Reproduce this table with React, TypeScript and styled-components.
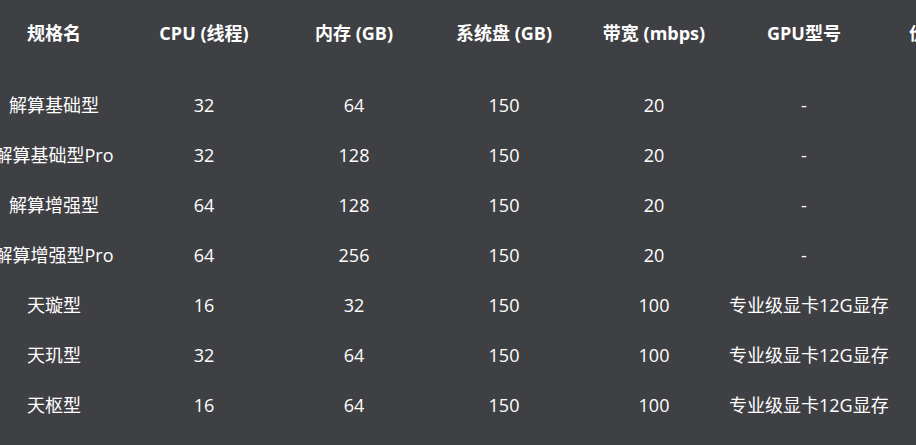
import React from "react";
import { styled, createGlobalStyle } from "styled-components";

type Spec = {
  name: string;
  cpu: number;
  mem: number;
  disk: number;
  bw: number;
  gpu: string;
};

const columns = [
  "规格名",
  "CPU (线程)",
  "内存 (GB)",
  "系统盘 (GB)",
  "带宽 (mbps)",
  "GPU型号",
  "价格 (元/h)",
];

const specs: Spec[] = [
  { name: "解算基础型", cpu: 32, mem: 64, disk: 150, bw: 20, gpu: "-" },
  { name: "解算基础型Pro", cpu: 32, mem: 128, disk: 150, bw: 20, gpu: "-" },
  { name: "解算增强型", cpu: 64, mem: 128, disk: 150, bw: 20, gpu: "-" },
  { name: "解算增强型Pro", cpu: 64, mem: 256, disk: 150, bw: 20, gpu: "-" },
  { name: "天璇型", cpu: 16, mem: 32, disk: 150, bw: 100, gpu: "专业级显卡12G显存" },
  { name: "天玑型", cpu: 32, mem: 64, disk: 150, bw: 100, gpu: "专业级显卡12G显存" },
  { name: "天枢型", cpu: 16, mem: 64, disk: 150, bw: 100, gpu: "专业级显卡12G显存" },
];

function App() {
  return (
    <>
      <GlobalStyle />
      <StPage>
        <StTable>
          <StHeadRow>
            {columns.map((c) => (
              <StHeadCell key={c}>{c}</StHeadCell>
            ))}
          </StHeadRow>
          <StBody>
            {specs.map((s) => (
              <StRow key={s.name}>
                <StCell>{s.name}</StCell>
                <StCell>{s.cpu}</StCell>
                <StCell>{s.mem}</StCell>
                <StCell>{s.disk}</StCell>
                <StCell>{s.bw}</StCell>
                <StCell>{s.gpu}</StCell>
                <StCell />
              </StRow>
            ))}
          </StBody>
        </StTable>
      </StPage>
    </>
  );
}

export default App;

const GlobalStyle = createGlobalStyle`
  html, body {
    margin: 0;
    padding: 0;
    background-color: #3f4044;
  }
  body {
    font-family: "Open Sans", "Noto Sans CJK SC", sans-serif;
    color: #ffffff;
  }
`;

const StPage = styled.div`
  width: 916px;
  height: 445px;
  overflow: hidden;
  background-color: #3f4044;
`;

// 표는 왼쪽으로 조금 밀려 있어 첫 열이 잘려 보입니다.
const StTable = styled.div`
  display: flex;
  flex-direction: column;
  width: 1050px;
  margin-left: -21px;
`;

const StHeadRow = styled.div`
  display: grid;
  grid-template-columns: repeat(7, 150px);
  height: 66px;
  align-items: center;
`;

const StHeadCell = styled.div`
  text-align: center;
  font-size: 18px;
  font-weight: 700;
  line-height: 24px;
  white-space: nowrap;
`;

const StBody = styled.div`
  display: flex;
  flex-direction: column;
  padding-top: 14px;
`;

const StRow = styled.div`
  display: grid;
  grid-template-columns: repeat(7, 150px);
  height: 50px;
  align-items: center;
`;

const StCell = styled.div`
  text-align: center;
  font-size: 18px;
  line-height: 24px;
  white-space: nowrap;
`;
